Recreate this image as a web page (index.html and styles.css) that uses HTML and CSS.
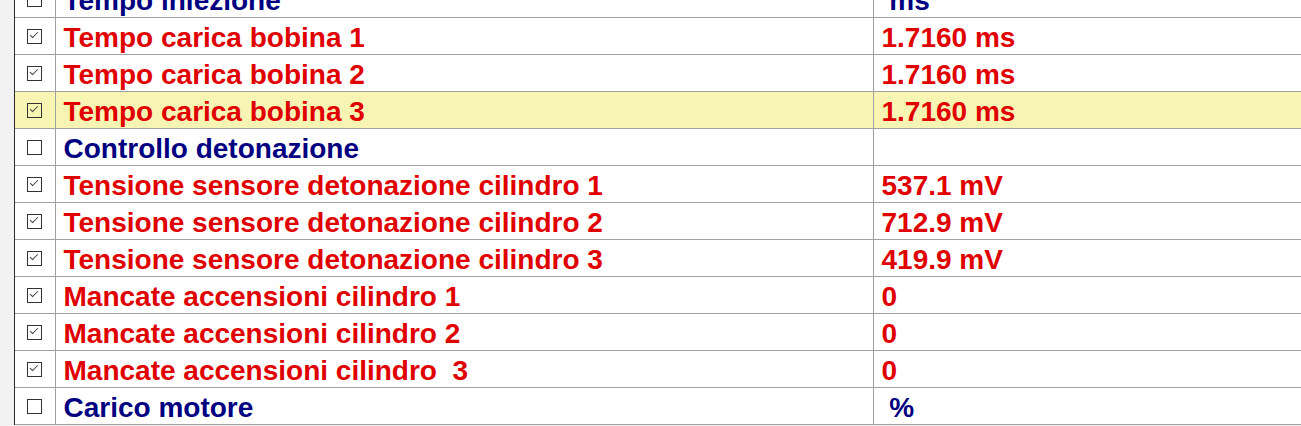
FILE: index.html
```html
<!DOCTYPE html>
<html>
<head>
<meta charset="utf-8">
<link rel="stylesheet" href="styles.css">
</head>
<body>
<div class="frame">
<table class="grid">
<colgroup><col class="c-chk"><col class="c-name"><col class="c-val"></colgroup>
<tr class="blue"><td class="chk"><span class="box"></span></td><td class="name">Tempo iniezione</td><td class="val"> ms</td></tr>
<tr class="red"><td class="chk"><span class="box on"></span></td><td class="name">Tempo carica bobina 1</td><td class="val">1.7160 ms</td></tr>
<tr class="red"><td class="chk"><span class="box on"></span></td><td class="name">Tempo carica bobina 2</td><td class="val">1.7160 ms</td></tr>
<tr class="red sel"><td class="chk"><span class="box on"></span></td><td class="name">Tempo carica bobina 3</td><td class="val">1.7160 ms</td></tr>
<tr class="blue"><td class="chk"><span class="box"></span></td><td class="name">Controllo detonazione</td><td class="val"></td></tr>
<tr class="red"><td class="chk"><span class="box on"></span></td><td class="name">Tensione sensore detonazione cilindro 1</td><td class="val">537.1 mV</td></tr>
<tr class="red"><td class="chk"><span class="box on"></span></td><td class="name">Tensione sensore detonazione cilindro 2</td><td class="val">712.9 mV</td></tr>
<tr class="red"><td class="chk"><span class="box on"></span></td><td class="name">Tensione sensore detonazione cilindro 3</td><td class="val">419.9 mV</td></tr>
<tr class="red"><td class="chk"><span class="box on"></span></td><td class="name">Mancate accensioni cilindro 1</td><td class="val">0</td></tr>
<tr class="red"><td class="chk"><span class="box on"></span></td><td class="name">Mancate accensioni cilindro 2</td><td class="val">0</td></tr>
<tr class="red"><td class="chk"><span class="box on"></span></td><td class="name">Mancate accensioni cilindro&nbsp; 3</td><td class="val">0</td></tr>
<tr class="blue"><td class="chk"><span class="box"></span></td><td class="name">Carico motore</td><td class="val">&nbsp;%</td></tr>
</table>
</div>
</body>
</html>
```
FILE: styles.css
```css
html, body {
  margin: 0;
  padding: 0;
  background: #f2f2f2;
  overflow: hidden;
}
.frame {
  margin-left: 14px;
  margin-top: -19px;
  border-left: 1px solid #2a2a2a;
  background: #ffffff;
}
.grid {
  border-collapse: collapse;
  width: 1286px;
  table-layout: fixed;
  font-family: "Liberation Sans", Arial, sans-serif;
  font-weight: bold;
  font-size: 28px;
}
.c-chk { width: 40px; }
.c-name { width: 818px; }
.c-val { width: auto; }
.grid td {
  padding: 4px 0 0 0;
  border-bottom: 1px solid #a0a0a0;
  border-right: 1px solid #a0a0a0;
  white-space: pre;
  vertical-align: middle;
  line-height: 32px;
}
.grid td.chk { padding: 0; }
.grid td.val { border-right: none; padding-left: 8px; }
.grid td.name { padding-left: 8px; }
.box {
  display: block;
  width: 15px;
  height: 15px;
  margin: 1px 0 0 12px;
  border: 1px solid #333;
  box-sizing: border-box;
  position: relative;
  background: #fff;
}
.sel .box { background: transparent; }
.box.on::after {
  content: "";
  position: absolute;
  left: 2px;
  top: 2px;
  width: 7px;
  height: 3px;
  border-left: 1px solid #444;
  border-bottom: 1px solid #444;
  transform: rotate(-45deg);
}
.red td { color: #e00000; }
.blue td { color: #000080; }
.sel td { background: #f8f5b4; }
```
